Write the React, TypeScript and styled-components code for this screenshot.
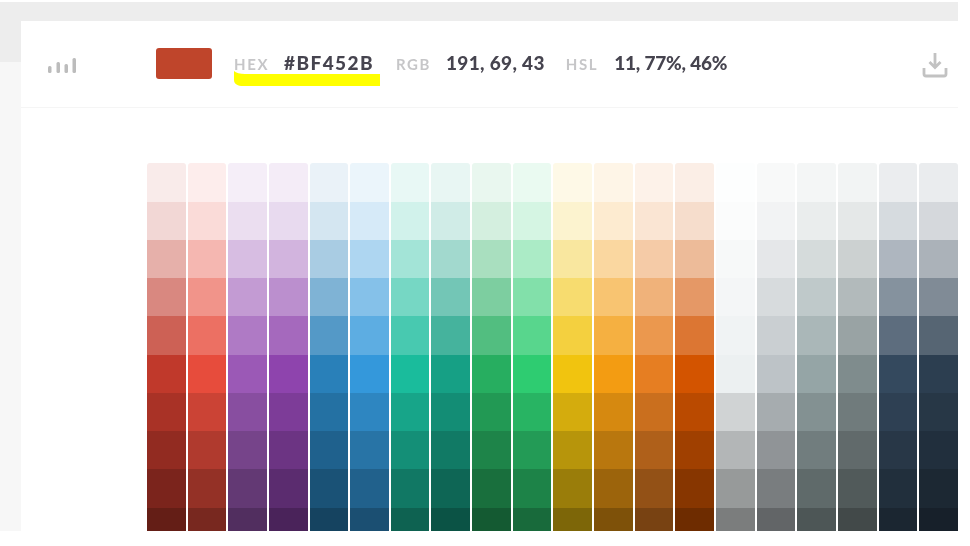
import React from 'react';
import styled, { createGlobalStyle } from 'styled-components';

const GlobalStyle = createGlobalStyle`
  html, body {
    margin: 0;
    padding: 0;
    background: #ffffff;
    overflow: hidden;
  }
`;

// one entry per column, lightest shade first
const palette: string[][] = [
  ['F9EBEA', 'F2D7D5', 'E6B0AA', 'D98880', 'CD6155', 'C0392B', 'A93226', '922B21', '7B241C', '641E16'],
  ['FDEDEC', 'FADBD8', 'F5B7B1', 'F1948A', 'EC7063', 'E74C3C', 'CB4335', 'B03A2E', '943126', '78281F'],
  ['F5EEF8', 'EBDEF0', 'D7BDE2', 'C39BD3', 'AF7AC5', '9B59B6', '884EA0', '76448A', '633974', '512E5F'],
  ['F4ECF7', 'E8DAEF', 'D2B4DE', 'BB8FCE', 'A569BD', '8E44AD', '7D3C98', '6C3483', '5B2C6F', '4A235A'],
  ['EAF2F8', 'D4E6F1', 'A9CCE3', '7FB3D5', '5499C7', '2980B9', '2471A3', '1F618D', '1A5276', '154360'],
  ['EBF5FB', 'D6EAF8', 'AED6F1', '85C1E9', '5DADE2', '3498DB', '2E86C1', '2874A6', '21618C', '1B4F72'],
  ['E8F8F5', 'D1F2EB', 'A3E4D7', '76D7C4', '48C9B0', '1ABC9C', '17A589', '148F77', '117864', '0E6251'],
  ['E8F6F3', 'D0ECE7', 'A2D9CE', '73C6B6', '45B39D', '16A085', '138D75', '117A65', '0E6655', '0B5345'],
  ['E9F7EF', 'D4EFDF', 'A9DFBF', '7DCEA0', '52BE80', '27AE60', '229954', '1E8449', '196F3D', '145A32'],
  ['EAFAF1', 'D5F5E3', 'ABEBC6', '82E0AA', '58D68D', '2ECC71', '28B463', '239B56', '1D8348', '186A3B'],
  ['FEF9E7', 'FCF3CF', 'F9E79F', 'F7DC6F', 'F4D03F', 'F1C40F', 'D4AC0D', 'B7950B', '9A7D0A', '7D6608'],
  ['FEF5E7', 'FDEBD0', 'FAD7A0', 'F8C471', 'F5B041', 'F39C12', 'D68910', 'B9770E', '9C640C', '7E5109'],
  ['FDF2E9', 'FAE5D3', 'F5CBA7', 'F0B27A', 'EB984E', 'E67E22', 'CA6F1E', 'AF601A', '935116', '784212'],
  ['FBEEE6', 'F6DDCC', 'EDBB99', 'E59866', 'DC7633', 'D35400', 'BA4A00', 'A04000', '873600', '6E2C00'],
  ['FDFEFE', 'FBFCFC', 'F7F9F9', 'F4F6F7', 'F0F3F4', 'ECF0F1', 'D0D3D4', 'B3B6B7', '979A9A', '7B7D7D'],
  ['F8F9F9', 'F2F3F4', 'E5E7E9', 'D7DBDD', 'CACFD2', 'BDC3C7', 'A6ACAF', '909497', '797D7F', '626567'],
  ['F4F6F6', 'EAEDED', 'D5DBDB', 'BFC9CA', 'AAB7B8', '95A5A6', '839192', '717D7E', '5F6A6A', '4D5656'],
  ['F2F4F4', 'E5E8E8', 'CCD1D1', 'B2BABB', '99A3A4', '7F8C8D', '707B7C', '616A6B', '515A5A', '424949'],
  ['EBEDEF', 'D6DBDF', 'AEB6BF', '85929E', '5D6D7E', '34495E', '2E4053', '283747', '212F3C', '1B2631'],
  ['EAECEE', 'D5D8DC', 'ABB2B9', '808B96', '566573', '2C3E50', '273746', '212F3D', '1C2833', '17202A'],
];

const Page = styled.div`
  width: 970px;
  height: 546px;
  overflow: hidden;
  display: grid;
  grid-template-columns: 21px 937px 12px;
  grid-template-rows: 2px 19px 41px 469px 15px;
  background: #ffffff;
  filter: blur(0.7px);
`;

const TopStrip = styled.div`
  grid-column: 1 / 3;
  grid-row: 2;
  background: #ededed;
`;

const SideTop = styled.div`
  grid-column: 1;
  grid-row: 3;
  background: #ededed;
`;

const SideBottom = styled.div`
  grid-column: 1;
  grid-row: 4;
  background: #f7f7f7;
`;

const Card = styled.main`
  grid-column: 2;
  grid-row: 3 / 6;
  background: #ffffff;
  display: flex;
  flex-direction: column;
  min-height: 0;
`;

const Toolbar = styled.header`
  flex: none;
  height: 87px;
  box-sizing: border-box;
  border-bottom: 1px solid #f5f5f5;
  display: flex;
  align-items: flex-start;
  padding: 27px 10px 0 26px;
`;

const BarsIcon = styled.svg`
  flex: none;
  width: 30px;
  height: 18px;
  margin: 9px 79px 0 0;
`;

const Swatch = styled.div`
  flex: none;
  width: 56px;
  height: 31px;
  margin-right: 22px;
  border-radius: 3px;
  background: #bf452b;
`;

const Reading = styled.div<{ $gap: number; $after: number }>`
  flex: none;
  position: relative;
  display: flex;
  align-items: baseline;
  gap: ${(p) => p.$gap}px;
  margin-right: ${(p) => p.$after}px;
  height: 31px;
  line-height: 29px;
  font-family: Lato, 'Open Sans', sans-serif;
`;

const Label = styled.span`
  font-size: 15px;
  font-weight: 700;
  letter-spacing: 1.6px;
  color: #c6c6c8;
`;

const Value = styled.span<{ $tracking: number }>`
  font-size: 19px;
  font-weight: 900;
  letter-spacing: ${(p) => p.$tracking}px;
  color: #46444f;
`;

const Highlight = styled.svg`
  position: absolute;
  left: -1px;
  top: 23px;
  width: 148px;
  height: 15px;
`;

const DownloadIcon = styled.svg`
  flex: none;
  width: 26px;
  height: 26px;
  margin: 4px 0 0 auto;
`;

const ChartArea = styled.section`
  flex: none;
  height: 367.7px;
  margin: 55.3px 0 0 126px;
  display: flex;
  gap: 2px;
  overflow: hidden;
`;

const Column = styled.div`
  flex: none;
  width: 38.65px;
  display: flex;
  flex-direction: column;
  border-radius: 3px 3px 0 0;
  overflow: hidden;
`;

const Shade = styled.div<{ $hex: string }>`
  flex: none;
  height: 38.25px;
  background: #${(p) => p.$hex};
`;

const App: React.FC = () => {
  return (
    <>
      <GlobalStyle />
      <Page>
        <TopStrip />
        <SideTop />
        <SideBottom />
        <Card>
          <Toolbar>
            <BarsIcon viewBox="0 0 30 18" fill="#bcbcbc">
              <rect x="1" y="9" width="3.5" height="7" rx="1.5" />
              <rect x="9.5" y="5" width="3.5" height="11" rx="1.5" />
              <rect x="17.5" y="7" width="3.5" height="9" rx="1.5" />
              <rect x="25.5" y="1" width="3.5" height="15" rx="1.5" />
            </BarsIcon>
            <Swatch />
            <Reading $gap={15} $after={22}>
              <Label>HEX</Label>
              <Value $tracking={1.4}>#BF452B</Value>
              <Highlight viewBox="0 0 148 15">
                <path d="M1 0 C3 2 7 3 12 3 L147 3 L147 15 L10 15 C5 15 1 13 1 9 Z" fill="#ffff00" />
              </Highlight>
            </Reading>
            <Reading $gap={15} $after={21}>
              <Label>RGB</Label>
              <Value $tracking={0.33}>191, 69, 43</Value>
            </Reading>
            <Reading $gap={16} $after={0}>
              <Label>HSL</Label>
              <Value $tracking={-0.2}>11, 77%, 46%</Value>
            </Reading>
            <DownloadIcon viewBox="0 0 26 26" fill="none" stroke="#c2c2c2" strokeWidth="2.8">
              <path d="M13 1 V15 M7.5 10 L13 15.5 L18.5 10" />
              <path d="M2 16 V22 Q2 24 4 24 H22 Q24 24 24 22 V16" />
            </DownloadIcon>
          </Toolbar>
          <ChartArea>
            {palette.map((shades) => (
              <Column key={shades[0]}>
                {shades.map((hex) => (
                  <Shade key={hex} $hex={hex} />
                ))}
              </Column>
            ))}
          </ChartArea>
        </Card>
      </Page>
    </>
  );
};

export default App;
